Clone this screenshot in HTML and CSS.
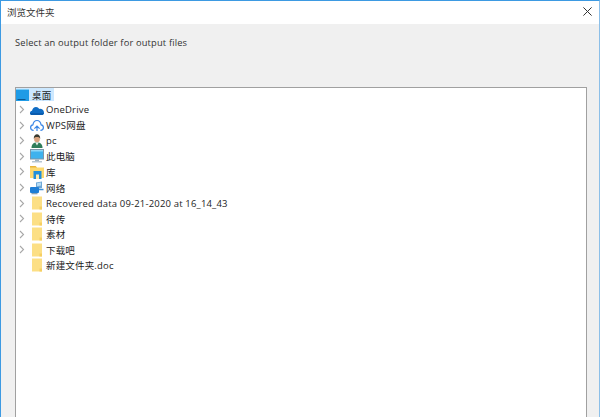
FILE: index.html
```html
<!DOCTYPE html>
<html lang="zh">
<head>
<meta charset="utf-8">
<title>浏览文件夹</title>
<link rel="stylesheet" href="styles.css">
</head>
<body>
<div class="window">
  <header class="titlebar">
    <span class="title">浏览文件夹</span>
    <svg class="close" viewBox="0 0 9 9"><path d="M.4.4l8.200 8.200M8.600.4L.4 8.600"/></svg>
  </header>
  <main class="content">
    <p class="prompt">Select an output folder for output files</p>
    <div class="tree">
      <div class="row root">
        <span class="selected">
          <svg class="icon" viewBox="0 0 14 14"><rect x="0" y="1" width="13" height="12" fill="#1f9be6"/><rect x="0" y="1" width="13" height="1" fill="#7ccbf5"/><rect x="1.500" y="11" width="8" height="1" fill="#0d568f"/></svg>
          <span class="label">桌面</span>
        </span>
      </div>
      <div class="row"><svg class="chev" viewBox="0 0 6 9"><path d="M1 1l3.500 3.500L1 8"/></svg><svg class="icon" viewBox="0 0 14 14"><path d="M2.300 12C.8 12 0 11 0 9.900 0 8.700.9 7.800 2 7.700 2.500 5.500 4 4 6 4c1.500 0 2.600.8 3.200 1.900C11.500 5.400 14 7 14 9.500c0 1.500-1 2.500-2.500 2.500z" fill="#0f6cc4"/><path d="M2.300 12C.8 12 0 11 0 9.900h14c0 1.100-1 2.100-2.500 2.100z" fill="#0a5cae"/></svg><span class="label">OneDrive</span></div>
      <div class="row"><svg class="chev" viewBox="0 0 6 9"><path d="M1 1l3.500 3.500L1 8"/></svg><svg class="icon" viewBox="0 0 14 14"><path d="M3.600 12.300C1.700 12.300.6 11 .6 9.500c0-1.400 1-2.500 2.300-2.700C3.300 4.300 5 2.500 7 2.500s3.700 1.800 4.100 4.300c1.300.2 2.300 1.300 2.300 2.700 0 1.500-1.100 2.800-3 2.800" fill="none" stroke="#3a86e6" stroke-width="1.200"/><path d="M4.400 10.600L7 8l2.600 2.600M7 8v5" fill="none" stroke="#3a86e6" stroke-width="1.200"/></svg><span class="label">WPS网盘</span></div>
      <div class="row"><svg class="chev" viewBox="0 0 6 9"><path d="M1 1l3.500 3.500L1 8"/></svg><svg class="icon" viewBox="0 0 14 14"><path d="M1.500 14c0-3.500 1.700-5.500 5.500-5.500s5.500 2 5.500 5.500z" fill="#2f7d5a"/><path d="M5.300 8.500L7 11.500l1.700-3z" fill="#e8f0ea"/><ellipse cx="7" cy="5" rx="2.900" ry="3.300" fill="#d8a27e"/><path d="M3.800 5C3.500 1.800 5.300.3 7 .3s3.500 1.500 3.200 4.700C9.800 3.500 8.800 3 7 3s-2.800.5-3.200 2z" fill="#3a3a30"/></svg><span class="label">pc</span></div>
      <div class="row"><svg class="chev" viewBox="0 0 6 9"><path d="M1 1l3.500 3.500L1 8"/></svg><svg class="icon" viewBox="0 0 14 14"><rect x=".5" y=".5" width="13" height="9.500" fill="#3fb2ee" stroke="#7d97aa"/><rect x="1" y="1" width="12" height="1.500" fill="#8ed6f8"/><rect x="5" y="10.500" width="4" height="1.500" fill="#9eb2c0"/><rect x="2" y="12" width="10" height="1.500" fill="#b7c6d1"/></svg><span class="label">此电脑</span></div>
      <div class="row"><svg class="chev" viewBox="0 0 6 9"><path d="M1 1l3.500 3.500L1 8"/></svg><svg class="icon" viewBox="0 0 14 14"><path d="M0 1h5.500l1.500 1.500h7V13H0z" fill="#fcd970"/><path d="M0 1h5.500L7 2.500H0z" fill="#e8b53a"/><rect x="3.500" y="6" width="8" height="8" fill="#1f8fdc"/><rect x="6" y="9.500" width="3" height="4.500" fill="#fdeab0"/></svg><span class="label">库</span></div>
      <div class="row"><svg class="chev" viewBox="0 0 6 9"><path d="M1 1l3.500 3.500L1 8"/></svg><svg class="icon" viewBox="0 0 14 14"><path d="M6 1.500L12 .5v6.500l-6 1z" fill="#6fa8d6"/><path d="M7 2.300l4-.7v3l-4 .7z" fill="#b5dcf5"/><rect x="0" y="6" width="9" height="6" rx="1" fill="#1f7fd6"/><rect x="1.500" y="12" width="6" height="1.300" fill="#8aa2b4"/><path d="M9 8.500h4.500" stroke="#3a8fd8" stroke-width="1.500"/></svg><span class="label">网络</span></div>
      <div class="row"><svg class="chev" viewBox="0 0 6 9"><path d="M1 1l3.500 3.500L1 8"/></svg><svg class="icon" viewBox="0 0 14 14"><path class="folder" d="M2 .5h10v13H2z"/><path class="fold" d="M9.500 10.500H12v3H9.500z"/></svg><span class="label">Recovered data 09-21-2020 at 16_14_43</span></div>
      <div class="row"><svg class="chev" viewBox="0 0 6 9"><path d="M1 1l3.500 3.500L1 8"/></svg><svg class="icon" viewBox="0 0 14 14"><path class="folder" d="M2 .5h10v13H2z"/><path class="fold" d="M9.500 10.500H12v3H9.500z"/></svg><span class="label">待传</span></div>
      <div class="row"><svg class="chev" viewBox="0 0 6 9"><path d="M1 1l3.500 3.500L1 8"/></svg><svg class="icon" viewBox="0 0 14 14"><path class="folder" d="M2 .5h10v13H2z"/><path class="fold" d="M9.500 10.500H12v3H9.500z"/></svg><span class="label">素材</span></div>
      <div class="row"><svg class="chev" viewBox="0 0 6 9"><path d="M1 1l3.500 3.500L1 8"/></svg><svg class="icon" viewBox="0 0 14 14"><path class="folder" d="M2 .5h10v13H2z"/><path class="fold" d="M9.500 10.500H12v3H9.500z"/></svg><span class="label">下载吧</span></div>
      <div class="row leaf"><svg class="icon" viewBox="0 0 14 14"><path class="folder" d="M2 .5h10v13H2z"/><path class="fold" d="M9.500 10.500H12v3H9.500z"/></svg><span class="label">新建文件夹.doc</span></div>
    </div>
  </main>
</div>
</body>
</html>
```

FILE: styles.css
```css
html, body {
  margin: 0;
  height: 100%;
  overflow: hidden;
}
body {
  font-family: "Noto Sans CJK SC", "Open Sans", sans-serif;
  color: #1c1c1c;
}
.window {
  box-sizing: border-box;
  width: 600px;
  height: 417px;
  display: flex;
  flex-direction: column;
  border: 1px solid #3d9ae2;
  border-bottom: 0;
  border-right-color: #8cbfe8;
}
.titlebar {
  flex: 0 0 23px;
  box-sizing: border-box;
  display: flex;
  align-items: center;
  justify-content: space-between;
  padding: 0 7px 2px 6px;
  background: #fff;
}
.title {
  font-size: 9.500px;
  color: #333;
}
.close {
  display: block;
  width: 9px;
  height: 9px;
  fill: none;
  stroke: #333;
  stroke-width: 1;
}
.content {
  flex: 1;
  min-height: 0;
  background: #f0f0f0;
  padding: 12px 12px 0 14px;
  display: flex;
  flex-direction: column;
}
.prompt {
  margin: 0 0 37px;
  font-family: "Open Sans", "Noto Sans CJK SC", sans-serif;
  font-size: 9.300px;
  line-height: 14px;
  letter-spacing: .17px;
  color: #333;
}
.tree {
  flex: 1;
  background: #fff;
  border: 1px solid #a0a0a0;
  border-bottom: 0;
}
.row {
  height: 15.550px;
  display: flex;
  align-items: center;
  font-size: 9.500px;
  padding-left: 3px;
}
.row .icon {
  margin-left: 5px;
}
.root {
  height: 14px;
  padding-left: 0;
  align-items: flex-start;
}
.selected {
  display: flex;
  align-items: center;
  background: #cce8ff;
  height: 13px;
  padding-right: 3px;
}
.selected .icon {
  margin-left: 0;
}
.selected .label {
  margin-left: 2px;
}
.leaf {
  padding-left: 9px;
}
.chev {
  width: 6px;
  height: 9px;
  fill: none;
  stroke: #a8a8a8;
  stroke-width: 1.100;
}
.icon {
  width: 14px;
  height: 14px;
  flex: none;
}
.folder {
  fill: #fcdf85;
}
.fold {
  fill: #f6cf62;
}
.label {
  margin-left: 2px;
  white-space: nowrap;
  font-family: "Open Sans", "Noto Sans CJK SC", sans-serif;
  letter-spacing: .17px;
}
```
